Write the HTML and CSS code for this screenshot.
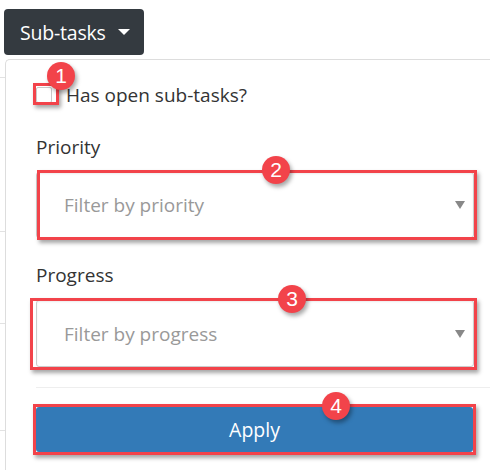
FILE: index.html
```html
<!DOCTYPE html>
<html>
<head>
<meta charset="utf-8">
<link rel="stylesheet" href="styles.css">
</head>
<body>
<div class="page">
  <div class="toolbar">
    <button class="dd-btn">Sub-tasks <span class="caret"></span></button>
  </div>
  <div class="main">
    <div class="strip">
      <div class="row r1"></div>
      <div class="row r2"></div>
      <div class="row r3"></div>
      <div class="row r4"></div>
    </div>
    <div class="panel">
      <label class="check-row">
        <span class="anchor">
          <span class="checkbox"></span>
          <span class="hl hl-check"></span>
          <span class="badge b1">1</span>
        </span>
        <span class="check-text">Has open sub-tasks?</span>
      </label>
      <div class="label first">Priority</div>
      <div class="anchor">
        <div class="select s1"><span class="ph">Filter by priority</span><span class="tri"></span></div>
        <span class="hl hl-s1"></span>
        <span class="badge b2">2</span>
      </div>
      <div class="label">Progress</div>
      <div class="anchor">
        <div class="select s2"><span class="ph">Filter by progress</span><span class="tri"></span></div>
        <span class="hl hl-s2"></span>
        <span class="badge b3">3</span>
      </div>
      <div class="divider"></div>
      <div class="anchor">
        <button class="apply">Apply</button>
        <span class="hl hl-apply"></span>
        <span class="badge b4">4</span>
      </div>
    </div>
  </div>
</div>
</body>
</html>
```
FILE: styles.css
```css
html, body { margin: 0; padding: 0; background: #fff; }
body { font-family: "Open Sans", "Noto Sans", sans-serif; color: #333; overflow: hidden; width: 490px; height: 470px; }
.page { padding-top: 9px; }
.toolbar { padding-left: 4px; }
.dd-btn {
  display: flex; align-items: center; gap: 12px;
  height: 46px; width: 140px; padding: 0 0 0 16px;
  background: #343a40; color: #fff; border: 0; border-radius: 4px;
  font-family: inherit; font-size: 19.5px; letter-spacing: -0.2px;
  box-sizing: border-box;
}
.caret { width: 0; height: 0; border-left: 6px solid transparent; border-right: 6px solid transparent; border-top: 6px solid #fff; }
.main { display: flex; margin-top: 4px; }
.strip { width: 5px; flex: none; }
.row { border-bottom: 1px solid #e2e2e2; box-sizing: border-box; }
.r1 { height: 19px; }
.r2 { height: 154px; }
.r3 { height: 92px; }
.r4 { height: 107px; }
.panel {
  width: 485px; flex: none; box-sizing: border-box;
  border-left: 1px solid #ddd; border-top: 1px solid #ddd; border-top-left-radius: 5px;
  padding: 0 0 0 30px; height: 420px;
}
.anchor { position: relative; display: block; width: 438px; }
.check-row { display: flex; align-items: center; margin-top: 25px; height: 20px; }
.check-row .anchor { width: 16px; height: 16px; flex: none; }
.checkbox { display: block; width: 16px; height: 16px; box-sizing: border-box; border: 1px solid #c9c9c9; border-radius: 2px; background: #fff; }
.check-text { margin-left: 14px; font-size: 19px; line-height: 20px; color: #333; }
.label { font-size: 19px; line-height: 24px; margin-top: 25px; margin-bottom: 13px; color: #333; }
.label.first { margin-top: 30px; }
.select {
  height: 66px; box-sizing: border-box; border: 1px solid #ccc; border-radius: 3px;
  background: #fff; box-shadow: inset 0 1px 2px rgba(0,0,0,0.08);
  display: flex; align-items: center; justify-content: space-between;
  padding: 0 8px 0 27px;
}
.s2 { height: 67px; }
.ph { font-size: 19px; color: #999; }
.tri { width: 0; height: 0; border-left: 5px solid transparent; border-right: 5px solid transparent; border-top: 8px solid #888; }
.divider { height: 1px; background: #eee; margin: 20px 0 19px; }
.apply {
  display: block; width: 437px; height: 45px; border: 0; border-radius: 3px;
  background: #337ab7; color: #fff; font-family: inherit; font-size: 19.5px;
}
.hl { position: absolute; border: 3px solid #f2434a; box-shadow: 2px 3px 4px rgba(0,0,0,0.35); pointer-events: none; }
.hl-check { left: -3px; right: -7px; top: -4px; bottom: -2px; }
.hl-s1 { left: 1px; right: -3px; top: -2px; bottom: -2px; }
.hl-s2 { left: -6px; right: -3px; top: -2px; bottom: -3px; }
.hl-apply { left: -3px; right: -2px; top: -3px; bottom: -3px; }
.badge {
  position: absolute; width: 28px; height: 28px; border-radius: 50%;
  background: #f2434a; color: #fff; font-family: "Liberation Sans", Arial, sans-serif; font-size: 21px;
  display: flex; align-items: center; justify-content: center;
  box-shadow: 2px 3px 4px rgba(0,0,0,0.35);
}
.b1 { left: 11px; top: -25px; }
.b2 { left: 226px; top: -16px; }
.b3 { left: 242px; top: -15px; }
.b4 { left: 286px; top: -15px; }
```
